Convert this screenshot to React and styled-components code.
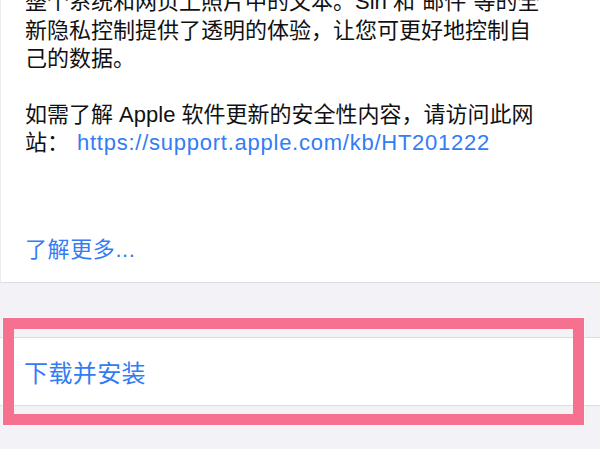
import React from "react";
import styled, { createGlobalStyle } from "styled-components";

const GlobalStyle = createGlobalStyle`
  html, body {
    margin: 0;
    padding: 0;
    background: #f2f2f7;
    overflow: hidden;
  }
  body {
    font-family: "Liberation Sans", "Noto Sans CJK SC", sans-serif;
    -webkit-font-smoothing: antialiased;
  }
`;

const Page = styled.div`
  position: relative;
  width: 600px;
  height: 449px;
  display: flex;
  flex-direction: column;
  background: #f2f2f7;
  overflow: hidden;
`;

const NotesPanel = styled.section`
  height: 283px;
  flex-shrink: 0;
  background: #ffffff;
  border-left: 1px solid #ececf0;
  border-bottom: 1px solid #dcdce1;
  padding-left: 24px;
  overflow: hidden;
  box-sizing: border-box;
`;

const Paragraph = styled.p`
  margin: ${(p) => p.$top || 0}px 0 0;
  font-size: 22px;
  line-height: 28.5px;
  color: #111111;
`;

const Line = styled.span`
  display: block;
  white-space: nowrap;
`;

const Link = styled.a`
  color: #327cf5;
  text-decoration: none;
  margin-left: 8px;
  letter-spacing: 0.75px;
`;

const MoreLink = styled.a`
  display: block;
  margin-top: 78px;
  font-size: 22px;
  line-height: 28.5px;
  letter-spacing: 0.6px;
  color: #327cf5;
  text-decoration: none;
`;

const Group = styled.div`
  margin-top: 54px;
  background: #ffffff;
  border-top: 1px solid #dcdce1;
  border-bottom: 1px solid #dcdce1;
`;

const ActionRow = styled.div`
  height: 67px;
  display: flex;
  align-items: center;
  padding-left: 24px;
  font-size: 24px;
  letter-spacing: 0.4px;
  color: #327cf5;
`;

const Highlight = styled.div`
  position: absolute;
  left: 3px;
  top: 318px;
  width: 581px;
  height: 107px;
  box-sizing: border-box;
  border: 11px solid #f6708f;
  box-shadow: 0 0 0 1px rgba(255, 255, 255, 0.55);
  pointer-events: none;
`;

export default function App() {
  return (
    <>
      <GlobalStyle />
      <Page>
        <NotesPanel>
          <Paragraph $top={-12}>
            <Line>整个系统和网页上照片中的文本。Siri 和“邮件”等的全</Line>
            <Line>新隐私控制提供了透明的体验，让您可更好地控制自</Line>
            <Line>己的数据。</Line>
          </Paragraph>
          <Paragraph $top={27}>
            <Line>如需了解 Apple 软件更新的安全性内容，请访问此网</Line>
            <Line>
              站：
              <Link href="#">https://support.apple.com/kb/HT201222</Link>
            </Line>
          </Paragraph>
          <MoreLink href="#">了解更多...</MoreLink>
        </NotesPanel>
        <Group>
          <ActionRow>下载并安装</ActionRow>
        </Group>
        <Highlight />
      </Page>
    </>
  );
}
